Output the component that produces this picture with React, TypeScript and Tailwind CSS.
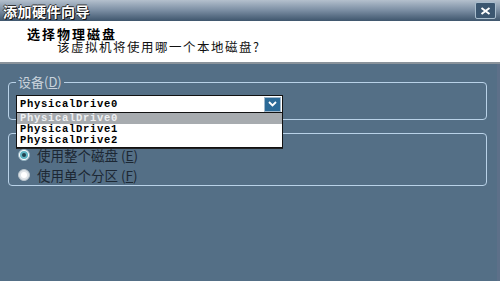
import { useState } from "react";

const drives = ["PhysicalDrive0", "PhysicalDrive1", "PhysicalDrive2"];

const cjk = "font-['Noto_Sans_CJK_SC','Noto_Sans',sans-serif]";
const mono = "font-['Liberation_Mono','DejaVu_Sans_Mono',monospace]";

function Radio({ checked }: { checked?: boolean }) {
  return checked ? (
    <span className="flex h-[12px] w-[12px] items-center justify-center rounded-full border border-[#8fb0c0] bg-white">
      <span className="flex h-[8px] w-[8px] items-center justify-center rounded-full bg-[#5fb3c2]">
        <span className="h-[4px] w-[4px] rounded-full bg-[#23404c]" />
      </span>
    </span>
  ) : (
    <span className="flex h-[12px] w-[12px] items-center justify-center rounded-full border border-[#b8c4cc] bg-[#dfe4e8]">
      <span className="h-[6px] w-[6px] rounded-full bg-white" />
    </span>
  );
}

export default function App() {
  const [selected] = useState(0);

  return (
    <div className={`flex h-[281px] w-[500px] flex-col overflow-hidden bg-[#546f86] ${cjk}`}>
      {/* title bar */}
      <div className="flex h-[21px] shrink-0 items-center justify-between bg-gradient-to-b from-[#b4c0cd] via-[#7a8da2] to-[#3f566d] pl-[3px] pr-[4px]">
        <span className="text-[14px] font-bold leading-none tracking-[0.5px] text-white [text-shadow:1px_1px_0_#111,-1px_0_0_#333,0_-1px_0_#333]">
          添加硬件向导
        </span>
        <button className="flex h-[17px] w-[21px] items-center justify-center rounded-[2px] border border-[#a9bdcd] bg-[#3b5670]">
          <svg width="11" height="8" viewBox="0 0 11 8">
            <path d="M1.5 1 L9.5 7 M9.5 1 L1.5 7" stroke="white" strokeWidth="2" />
          </svg>
        </button>
      </div>

      {/* header */}
      <div className="h-[43px] shrink-0 border-b-2 border-b-[#8a939b] bg-white pl-[27px] pt-[6px]">
        <div className="text-[13px] font-bold leading-[13px] tracking-[2px] text-black">选择物理磁盘</div>
        <div className="pl-[30px] text-[12.5px] leading-[13px] tracking-[1.5px] text-[#111]">该虚拟机将使用哪一个本地磁盘?</div>
      </div>

      <div className="flex flex-1">
        <div className="flex flex-1 flex-col pl-[8px] pr-[10px]">
          {/* device group */}
          <fieldset className="mt-[11px] rounded-[4px] border border-[#b9d2e8] px-[7px] pb-[6px]">
            <legend className="px-[2px] text-[13px] leading-[14px] text-[#c9d3dc]">
              设备(<span className="underline">D</span>)
            </legend>
            <div className="relative mt-[6px] w-[267px]">
              <div className="flex h-[18px] items-center border border-[#111] bg-white">
                <span className={`flex-1 pl-[3px] text-[10.5px] font-bold leading-none tracking-[0.7px] text-black ${mono}`}>
                  {drives[selected]}
                </span>
                <span className="mr-[1px] flex h-[15px] w-[17px] items-center justify-center border border-[#9fb8cc] bg-[#2c6a97]">
                  <svg width="9" height="6" viewBox="0 0 9 6">
                    <path d="M1 1 L4.5 4.5 L8 1" fill="none" stroke="white" strokeWidth="1.8" />
                  </svg>
                </span>
              </div>
              <ul className="absolute left-0 top-full z-10 w-full border border-t-0 border-[#111] bg-white pb-[1px] shadow-[0_1px_0_#222]">
                {drives.map((d, i) => (
                  <li
                    key={d}
                    className={`h-[11px] overflow-hidden pl-[3px] text-[10.5px] font-bold leading-[11px] tracking-[0.7px] ${mono} ${
                      i === selected ? "bg-[#a7abaf] text-[#eef0f2]" : "text-black"
                    }`}
                  >
                    {d}
                  </li>
                ))}
              </ul>
            </div>
          </fieldset>

          {/* disk usage group */}
          <div className="mt-[13px] flex flex-col rounded-[4px] border border-[#b9d2e8] pl-[9px] pt-[11px]">
            <label className="flex h-[20px] items-center gap-[7px] text-[13.5px] text-[#1c2733]">
              <Radio checked />
              <span>
                使用整个磁盘 (<span className="underline">E</span>)
              </span>
            </label>
            <label className="flex h-[20px] items-center gap-[7px] text-[13.5px] text-[#1c2733]">
              <Radio />
              <span>
                使用单个分区 (<span className="underline">F</span>)
              </span>
            </label>
          </div>
        </div>
        <div className="w-[3px] bg-[#5d7089]" />
      </div>
    </div>
  );
}
